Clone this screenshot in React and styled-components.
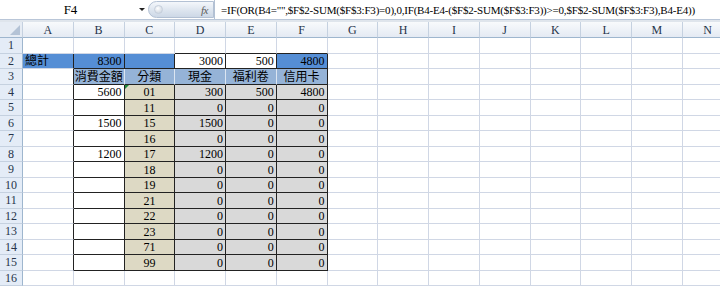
import React from "react";
import styled, { createGlobalStyle } from "styled-components";

const GlobalStyle = createGlobalStyle`
  html, body { margin: 0; padding: 0; background: #fff; overflow: hidden; }
  body { font-family: "Liberation Serif", "Noto Sans CJK TC", serif; color: #000; }
`;

const COLS = "ABCDEFGHIJKLMN".split("");
const GRID = "#d0d7e5";
const DARK = "#222";

const FORMULA =
  '=IF(OR(B4="",$F$2-SUM($F$3:F3)=0),0,IF(B4-E4-($F$2-SUM($F$3:F3))>=0,$F$2-SUM($F$3:F3),B4-E4))';

const cats = ["01", "11", "15", "16", "17", "18", "19", "21", "22", "23", "71", "99"];
const amounts = { 4: "5600", 6: "1500", 8: "1200" };
const cash = { 4: "300", 6: "1500", 8: "1200" };

const BG = {
  total: "#558ed5",
  head: "#95b3d7",
  cat: "#ddd9c4",
  calc: "#d9d9d9",
  plain: "#ffffff",
};

// what a cell holds, its fill and which of its right/bottom edges are dark
function cellSpec(r, c) {
  const s = { text: "", kind: "plain", align: "right", rb: false, bb: false, rl: false };
  const inBlock = c >= 1 && c <= 5;
  if (r === 1) {
    if (c >= 3 && c <= 5) s.bb = true;
  } else if (r === 2) {
    if (c <= 5) s.rb = true;
    if (inBlock) s.bb = true;
    if (c === 0) Object.assign(s, { kind: "total", text: "總計", align: "left" });
    if (c === 1) Object.assign(s, { kind: "total", text: "8300" });
    if (c === 2) s.kind = "total";
    if (c === 3) s.text = "3000";
    if (c === 4) s.text = "500";
    if (c === 5) Object.assign(s, { kind: "total", text: "4800" });
  } else if (r === 3) {
    if (c === 0 || c === 5) s.rb = true;
    if (c >= 1 && c <= 4) s.rl = true;
    if (inBlock) {
      s.bb = true;
      s.kind = "head";
      s.align = "center";
      s.text = ["", "消費金額", "分類", "現金", "福利卷", "信用卡"][c];
    }
  } else if (r <= 15) {
    if (c <= 5) s.rb = true;
    if (inBlock) s.bb = true;
    if (c === 1) s.text = amounts[r] || "";
    if (c === 2) Object.assign(s, { kind: "cat", align: "center", text: cats[r - 4] });
    if (c >= 3 && c <= 5) {
      s.kind = "calc";
      if (c === 3) s.text = cash[r] || "0";
      else if (c === 4) s.text = r === 4 ? "500" : "0";
      else s.text = r === 4 ? "4800" : "0";
    }
  }
  return s;
}

export default function App() {
  const rows = Array.from({ length: 16 }, (_, i) => i + 1);
  return (
    <Page>
      <GlobalStyle />
      <FormulaBar>
        <NameBox>
          <NameText>F4</NameText>
          <Caret />
        </NameBox>
        <FxCapsule>
          <Knob />
          <Fx>fx</Fx>
        </FxCapsule>
        <FormulaInput>{FORMULA}</FormulaInput>
      </FormulaBar>
      <Band />
      <Sheet>
        <Corner>
          <CornerMark />
        </Corner>
        {COLS.map((c) => (
          <ColHead key={c}>{c}</ColHead>
        ))}
        {rows.map((r) => (
          <React.Fragment key={r}>
            <RowHead>{r}</RowHead>
            {COLS.map((col, ci) => {
              const s = cellSpec(r, ci);
              return (
                <Cell
                  key={col}
                  $bg={BG[s.kind]}
                  $align={s.align}
                  $rb={s.rb}
                  $bb={s.bb}
                  $rl={s.rl}
                >
                  {r === 4 && ci === 2 && <ErrorMark />}
                  {s.text}
                </Cell>
              );
            })}
          </React.Fragment>
        ))}
      </Sheet>
    </Page>
  );
}

const Page = styled.div`
  width: 720px;
  height: 286px;
  overflow: hidden;
  display: flex;
  flex-direction: column;
  background: #fff;
`;

const FormulaBar = styled.div`
  height: 19px;
  display: flex;
  align-items: stretch;
  background: #fff;
  border-bottom: 1px solid #b9c6d8;
`;

const NameBox = styled.div`
  width: 148px;
  display: flex;
  align-items: center;
  font-size: 13px;
`;

const NameText = styled.span`
  flex: 1;
  text-align: center;
  padding-left: 2px;
`;

const Caret = styled.span`
  width: 0;
  height: 0;
  margin-right: 3px;
  border-left: 3px solid transparent;
  border-right: 3px solid transparent;
  border-top: 3px solid #222;
`;

const FxCapsule = styled.div`
  width: 66px;
  margin: 1px 0;
  display: flex;
  align-items: center;
  justify-content: space-between;
  padding: 0 5px 0 5px;
  box-sizing: border-box;
  border: 1px solid #b3c1d4;
  border-radius: 9px 0 0 9px;
  background: linear-gradient(#f4f7fb, #dde5ef 55%, #cdd8e6);
`;

const Knob = styled.span`
  width: 7px;
  height: 7px;
  border-radius: 50%;
  background: radial-gradient(circle at 40% 35%, #ffffff, #c2ccd9);
  border: 1px solid #c6cfdc;
`;

const Fx = styled.span`
  font-style: italic;
  font-size: 11px;
  color: #5a5a5a;
  letter-spacing: -0.5px;
`;

const FormulaInput = styled.div`
  flex: 1;
  display: flex;
  align-items: center;
  padding-left: 6px;
  border-left: 1px solid #b3c1d4;
  font-size: 11px;
  white-space: nowrap;
  overflow: hidden;
  letter-spacing: -0.2px;
`;

const Band = styled.div`
  height: 2px;
  background: #dfe5ec;
`;

const Sheet = styled.div`
  display: grid;
  grid-template-columns: 23px repeat(14, 50.75px);
  grid-template-rows: 16px;
  grid-auto-rows: 15.5px;
  font-size: 12px;
`;

const HeadBase = styled.div`
  box-sizing: border-box;
  display: flex;
  align-items: center;
  justify-content: center;
  color: #27344a;
  background: linear-gradient(#f8fafc, #e4eaf3);
  border-right: 1px solid #c5d1e0;
  border-bottom: 1px solid #9eb6ce;
`;

const Corner = styled(HeadBase)`
  position: relative;
  background: #e6ecf4;
`;

const CornerMark = styled.span`
  position: absolute;
  right: 2px;
  bottom: 2px;
  width: 0;
  height: 0;
  border-left: 10px solid transparent;
  border-bottom: 10px solid #b4c3d6;
`;

const ColHead = styled(HeadBase)`
  padding-top: 1px;
`;

const RowHead = styled(HeadBase)`
  background: #e4ecf7;
  border-right: 1px solid #9eb6ce;
  border-bottom: 1px solid #c5d1e0;
  padding-top: 1px;
`;

const Cell = styled.div`
  position: relative;
  box-sizing: border-box;
  display: flex;
  align-items: flex-end;
  justify-content: ${({ $align }) =>
    $align === "left" ? "flex-start" : $align === "center" ? "center" : "flex-end"};
  padding: 0 2px 0 2px;
  line-height: 14px;
  white-space: nowrap;
  overflow: hidden;
  background: ${({ $bg }) => $bg};
  border-right: 1px solid
    ${({ $rb, $rl }) => ($rb ? DARK : $rl ? "#dbe5f1" : GRID)};
  border-bottom: 1px solid ${({ $bb }) => ($bb ? DARK : GRID)};
`;

const ErrorMark = styled.span`
  position: absolute;
  top: 0;
  left: 0;
  width: 0;
  height: 0;
  border-top: 4px solid #1f8a3c;
  border-right: 4px solid transparent;
`;
